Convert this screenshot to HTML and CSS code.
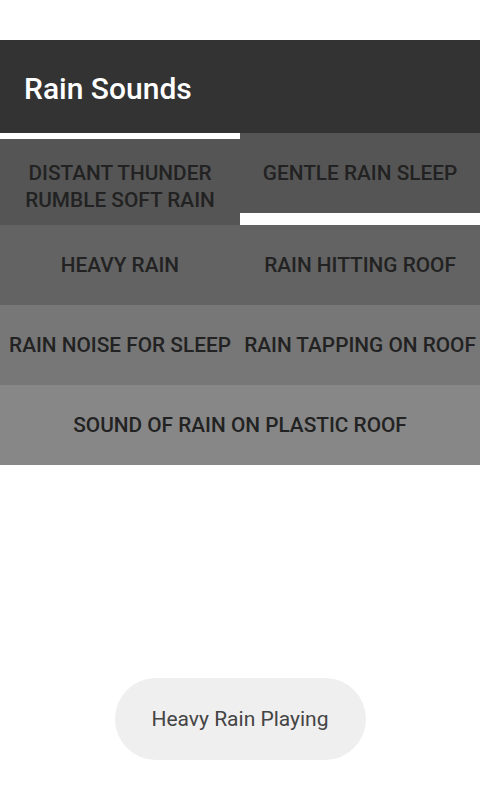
FILE: index.html
```html
<!DOCTYPE html>
<html>
<head>
<meta charset="utf-8">
<link rel="stylesheet" href="styles.css">
</head>
<body>
<div class="statusbar"></div>
<header class="appbar"><h1 class="title">Rain Sounds</h1></header>
<div class="tabs">
  <div class="row row1">
    <div class="cell cell-top selected-top">DISTANT THUNDER<br>RUMBLE SOFT RAIN</div>
    <div class="cell cell-top selected-bottom">GENTLE RAIN SLEEP</div>
  </div>
  <div class="row row2">
    <div class="cell">HEAVY RAIN</div>
    <div class="cell">RAIN HITTING ROOF</div>
  </div>
  <div class="row row3">
    <div class="cell">RAIN NOISE FOR SLEEP</div>
    <div class="cell">RAIN TAPPING ON ROOF</div>
  </div>
  <div class="row row4">
    <div class="cell wide">SOUND OF RAIN ON PLASTIC ROOF</div>
  </div>
</div>
<div class="spacer"></div>
<div class="toast-wrap"><div class="toast">Heavy Rain Playing</div></div>
</body>
</html>
```
FILE: styles.css
```css
* { box-sizing: border-box; }
html, body { margin: 0; padding: 0; }
body {
  width: 480px;
  height: 800px;
  background: #ffffff;
  font-family: Roboto, "Noto Sans", sans-serif;
  display: flex;
  flex-direction: column;
  overflow: hidden;
}
.statusbar { height: 40px; background: #ffffff; }
.appbar {
  height: 93px;
  background: #333333;
  display: flex;
  align-items: flex-start;
  padding: 34px 0 0 24px;
}
.title {
  margin: 0;
  font-size: 30px;
  line-height: 30px;
  font-weight: 500;
  color: #ffffff;
}
.tabs { display: flex; flex-direction: column; }
.row {
  display: grid;
  grid-template-columns: 240px 240px;
  height: 80px;
}
.row1 { height: 92px; background: #555555; }
.row2 { background: #636363; }
.row3 { background: #777777; }
.row4 { background: #878787; grid-template-columns: 480px; }
.cell {
  display: flex;
  align-items: center;
  justify-content: center;
  text-align: center;
  font-size: 20.8px;
  line-height: 27px;
  font-weight: 500;
  color: #222222;
  white-space: nowrap;
  position: relative;
}
.cell-top { align-items: flex-start; padding-top: 27px; }
.selected-top { border-top: 6px solid #ffffff; padding-top: 21px; }
.selected-bottom { border-bottom: 12px solid #ffffff; }
.spacer { flex: 1; }
.toast-wrap {
  display: flex;
  justify-content: center;
  padding: 0 0 40px 0;
}
.toast {
  width: 251px;
  height: 82px;
  border-radius: 41px;
  background: #efefef;
  color: #444444;
  font-size: 21px;
  display: flex;
  align-items: center;
  justify-content: center;
}
```
